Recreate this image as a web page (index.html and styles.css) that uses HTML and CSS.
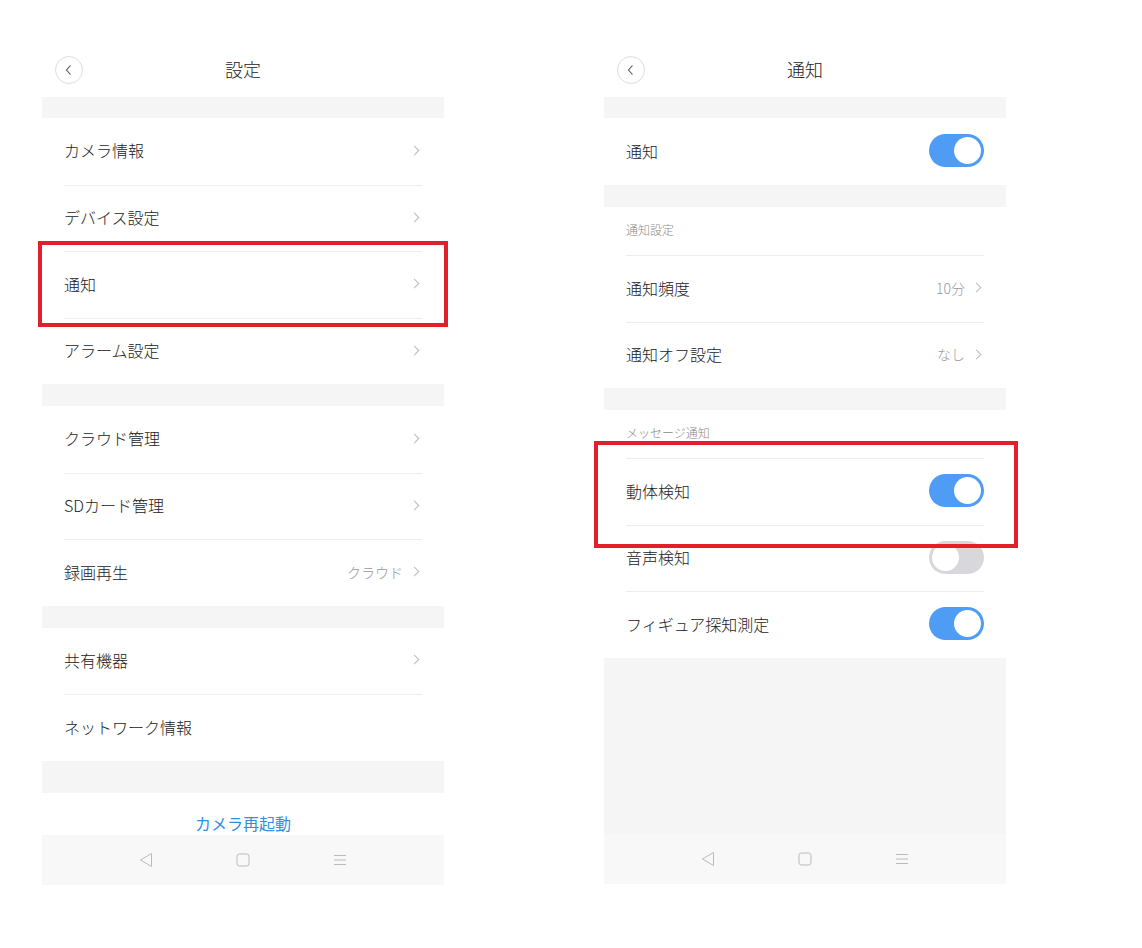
FILE: index.html
```html
<!doctype html>
<html lang="ja">
<head>
    <meta charset="UTF-8">
    <title>設定</title>
    <link rel="stylesheet" href="styles.css">
</head>
<body>
    <div class="screens">
        <!-- 設定 -->
        <div class="phone">
            <div class="header">
                <span class="back"><svg width="10" height="12" viewBox="0 0 10 12"><path d="M6.5 1.5 2.5 6l4 4.5" fill="none" stroke="#555" stroke-width="1.1"/></svg></span>
                <h1>設定</h1>
            </div>
            <div class="band band-first"></div>
            <div class="group">
                <div class="row"><span class="label">カメラ情報</span><span class="arrow"></span></div>
                <div class="row"><span class="label">デバイス設定</span><span class="arrow"></span></div>
                <div class="row"><span class="label">通知</span><span class="arrow"></span></div>
                <div class="row"><span class="label">アラーム設定</span><span class="arrow"></span></div>
            </div>
            <div class="band"></div>
            <div class="group">
                <div class="row"><span class="label">クラウド管理</span><span class="arrow"></span></div>
                <div class="row"><span class="label">SDカード管理</span><span class="arrow"></span></div>
                <div class="row"><span class="label">録画再生</span><span class="value">クラウド</span><span class="arrow"></span></div>
            </div>
            <div class="band"></div>
            <div class="group">
                <div class="row"><span class="label">共有機器</span><span class="arrow"></span></div>
                <div class="row"><span class="label">ネットワーク情報</span></div>
            </div>
            <div class="band band-tall"></div>
            <div class="restart">カメラ再起動</div>
            <div class="navbar">
                <svg width="14" height="16" viewBox="0 0 14 16"><path d="M12.5 1.5v13L1.5 8z" fill="none" stroke="#bbb" stroke-width="1" stroke-linejoin="round"/></svg>
                <svg width="14" height="14" viewBox="0 0 14 14"><rect x="1" y="1" width="12" height="12" rx="2.5" fill="none" stroke="#bbb" stroke-width="1"/></svg>
                <svg width="14" height="14" viewBox="0 0 14 14"><path d="M1 2.5h12M1 7h12M1 11.5h12" stroke="#bbb" stroke-width="1"/></svg>
            </div>
            <div class="mark mark-left"></div>
        </div>

        <!-- 通知 -->
        <div class="phone">
            <div class="header">
                <span class="back"><svg width="10" height="12" viewBox="0 0 10 12"><path d="M6.5 1.5 2.5 6l4 4.5" fill="none" stroke="#555" stroke-width="1.1"/></svg></span>
                <h1>通知</h1>
            </div>
            <div class="band band-first"></div>
            <div class="group">
                <div class="row row-single"><span class="label">通知</span><span class="switch on"></span></div>
            </div>
            <div class="band"></div>
            <div class="group">
                <div class="caption">通知設定</div>
                <div class="row"><span class="label">通知頻度</span><span class="value">10分</span><span class="arrow"></span></div>
                <div class="row"><span class="label">通知オフ設定</span><span class="value">なし</span><span class="arrow"></span></div>
            </div>
            <div class="band"></div>
            <div class="group">
                <div class="caption">メッセージ通知</div>
                <div class="row"><span class="label">動体検知</span><span class="switch on"></span></div>
                <div class="row"><span class="label">音声検知</span><span class="switch"></span></div>
                <div class="row"><span class="label">フィギュア探知測定</span><span class="switch on"></span></div>
            </div>
            <div class="filler"></div>
            <div class="navbar">
                <svg width="14" height="16" viewBox="0 0 14 16"><path d="M12.5 1.5v13L1.5 8z" fill="none" stroke="#bbb" stroke-width="1" stroke-linejoin="round"/></svg>
                <svg width="14" height="14" viewBox="0 0 14 14"><rect x="1" y="1" width="12" height="12" rx="2.5" fill="none" stroke="#bbb" stroke-width="1"/></svg>
                <svg width="14" height="14" viewBox="0 0 14 14"><path d="M1 2.5h12M1 7h12M1 11.5h12" stroke="#bbb" stroke-width="1"/></svg>
            </div>
            <div class="mark mark-right"></div>
        </div>
    </div>
</body>
</html>
```

FILE: styles.css
```css
*{
    padding: 0;
    margin: 0;
    box-sizing: border-box;
}
body{
    background: #fff;
    font-family: "Noto Sans CJK JP", "Noto Sans", sans-serif;
    font-weight: 300;
    color: #222;
}
.screens{
    display: flex;
    gap: 160px;
    padding-left: 42px;
}
.phone{
    width: 402px;
    position: relative;
    display: flex;
    flex-direction: column;
}
.header{
    height: 97px;
    padding-top: 43px;
    display: flex;
    align-items: center;
    justify-content: center;
    position: relative;
}
.header h1{
    font-size: 18px;
    font-weight: 300;
    height: 54px;
    line-height: 52px;
}
.back{
    position: absolute;
    left: 13px;
    top: 56px;
    width: 28px;
    height: 28px;
    border: 1px solid #dedede;
    border-radius: 50%;
    display: flex;
    align-items: center;
    justify-content: center;
}
.band{
    height: 22px;
    background: #f5f5f5;
}
.band-first{
    height: 21px;
}
.band-tall{
    height: 32px;
}
.group{
    padding: 0 22px;
}
.row{
    height: 66.5px;
    display: flex;
    align-items: center;
    font-size: 16px;
    padding-bottom: 2px;
}
.row + .row,
.caption + .row{
    border-top: 1px solid #eee;
}
.row-single{
    height: 67px;
}
.label{
    flex: 1;
}
.value{
    font-size: 14px;
    color: #999;
    margin-right: 8px;
}
.arrow{
    width: 7px;
    height: 7px;
    border-top: 1.2px solid #bbb;
    border-right: 1.2px solid #bbb;
    transform: rotate(45deg);
    margin-right: 4px;
}
.caption{
    height: 48px;
    line-height: 46px;
    font-size: 12px;
    color: #888;
}
.switch{
    width: 55px;
    height: 33px;
    border-radius: 17px;
    background: #d8d8dc;
    position: relative;
}
.switch::after{
    content: "";
    position: absolute;
    top: 3px;
    left: 3px;
    width: 27px;
    height: 27px;
    border-radius: 50%;
    background: #fff;
}
.switch.on{
    background: #4f9cf4;
}
.switch.on::after{
    left: 25px;
}
.restart{
    height: 42px;
    padding-top: 19px;
    text-align: center;
    font-size: 16px;
    font-weight: 400;
    line-height: 22px;
    color: #2f8ee0;
    overflow: hidden;
}
.filler{
    height: 176.5px;
    background: #f5f5f5;
}
.navbar{
    height: 50px;
    background: #f8f8f8;
    display: flex;
    align-items: center;
    justify-content: center;
    gap: 83px;
}
.mark{
    position: absolute;
    border: 4px solid #e0202a;
}
.mark-left{
    left: -4px;
    top: 241px;
    width: 410px;
    height: 86px;
}
.mark-right{
    left: -10px;
    top: 441px;
    width: 424px;
    height: 107px;
}
```
